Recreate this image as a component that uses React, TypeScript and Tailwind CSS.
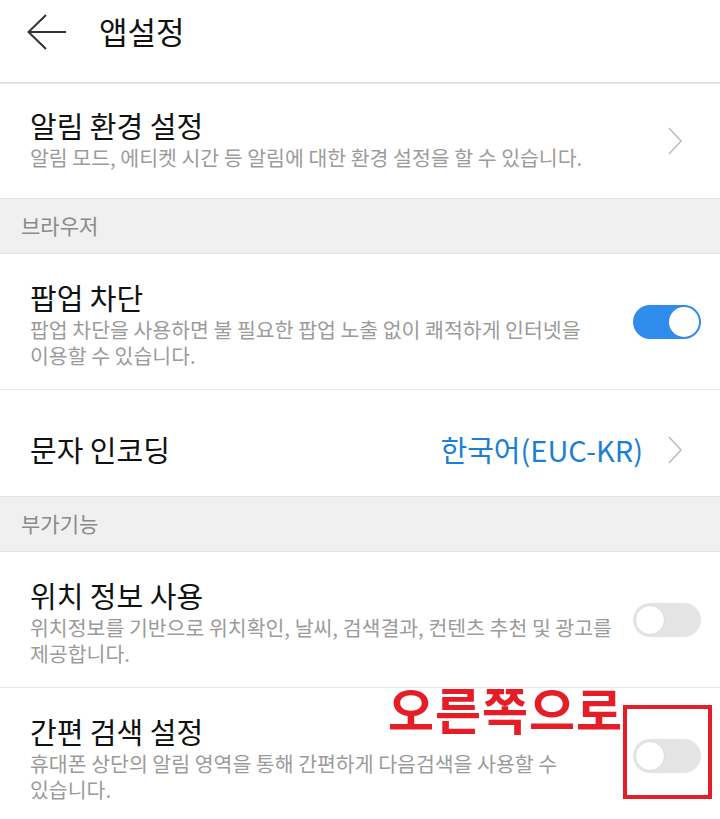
import React from "react";

const font = { fontFamily: '"Noto Sans CJK KR", "Noto Sans", sans-serif' };

const Toggle = ({ on }: { on: boolean }) => (
  <div
    className={`relative h-[34px] w-[68px] shrink-0 rounded-full ${
      on ? "bg-[#2f8bec]" : "bg-[#e4e4e4]"
    }`}
  >
    <div
      className={`absolute top-[2px] h-[30px] w-[30px] rounded-full bg-white ${
        on ? "right-[2px]" : "left-[2px] border border-[#dcdcdc]"
      }`}
    />
  </div>
);

const Chevron = () => (
  <svg width="16" height="28" viewBox="0 0 16 28" className="shrink-0">
    <path d="M2 1 L14 14 L2 27" fill="none" stroke="#bdbdbd" strokeWidth="1.6" />
  </svg>
);

const Section = ({ label }: { label: string }) => (
  <div className="flex h-[56px] items-center border-y border-[#e2e2e2] bg-[#f0f0f0] px-[21px]">
    <span className="text-[21px] text-[#8a8a8a]">{label}</span>
  </div>
);

const ToggleRow = ({ title, desc, on, last }: { title: string; desc: string; on: boolean; last?: boolean }) => (
  <div className={`flex h-[136px] items-center gap-5 pl-[30px] pr-[19px] ${last ? "" : "border-b border-[#e6e6e6]"}`}>
    <div className="flex-1 pt-[2px]">
      <div className="text-[29px] leading-[38px] text-[#111]">{title}</div>
      <div className="break-keep text-[20.5px] leading-[26px] text-[#9b9b9b]">{desc}</div>
    </div>
    <Toggle on={on} />
  </div>
);

export default function App() {
  return (
    <div className="relative h-[819px] w-[720px] overflow-hidden bg-white" style={font}>
      {/* header */}
      <div className="flex h-[84px] items-center border-b-2 border-[#e4e4e4] pb-[18px] pl-[27px]">
        <svg width="40" height="36" viewBox="0 0 40 36">
          <path d="M1.5 18 H39" stroke="#333" strokeWidth="2" fill="none" />
          <path d="M19 1 L1.5 18 L19 35" stroke="#333" strokeWidth="2" fill="none" />
        </svg>
        <span className="ml-[32px] -mt-[2px] text-[31px] text-[#111]">앱설정</span>
      </div>

      {/* 알림 환경 설정 */}
      <div className="flex h-[114px] items-center gap-4 pl-[30px] pr-[37px]">
        <div className="flex-1 -mt-[6px]">
          <div className="text-[29px] leading-[38px] text-[#111]">알림 환경 설정</div>
          <div className="break-keep text-[20.5px] leading-[26px] text-[#9b9b9b]">
            알림 모드, 에티켓 시간 등 알림에 대한 환경 설정을 할 수 있습니다.
          </div>
        </div>
        <Chevron />
      </div>

      <Section label="브라우저" />

      <ToggleRow
        title="팝업 차단"
        desc="팝업 차단을 사용하면 불 필요한 팝업 노출 없이 쾌적하게 인터넷을 이용할 수 있습니다."
        on
      />

      {/* 문자 인코딩 */}
      <div className="flex h-[106px] items-center pl-[30px] pr-[37px] pt-[14px]">
        <span className="flex-1 text-[29px] text-[#111]">문자 인코딩</span>
        <span className="mr-[24px] text-[29px] text-[#1b7fd4]">한국어(EUC-KR)</span>
        <Chevron />
      </div>

      <Section label="부가기능" />

      <ToggleRow
        title="위치 정보 사용"
        desc="위치정보를 기반으로 위치확인, 날씨, 검색결과, 컨텐츠 추천 및 광고를 제공합니다."
        on={false}
      />
      <ToggleRow
        title="간편 검색 설정"
        desc="휴대폰 상단의 알림 영역을 통해 간편하게 다음검색을 사용할 수 있습니다."
        on={false}
        last
      />

      {/* annotation overlay */}
      <div className="absolute left-[388px] top-[676px] text-[50px] font-bold leading-[64px] tracking-[1px] text-[#e41d26]">
        오른쪽으로
      </div>
      <div className="absolute left-[623px] top-[705px] h-[94px] w-[89px] border-[4px] border-[#e41d26]" />
    </div>
  );
}
